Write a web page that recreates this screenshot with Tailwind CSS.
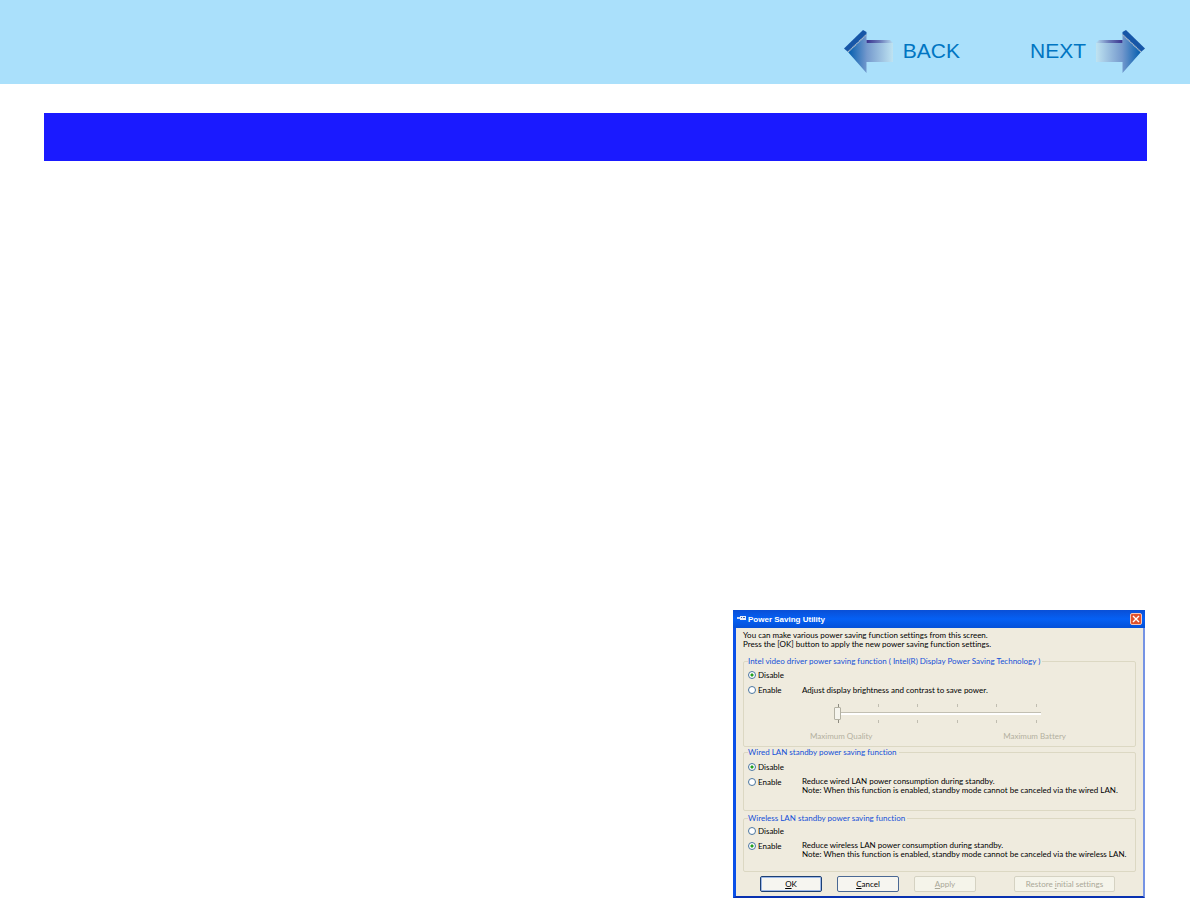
<!DOCTYPE html>
<html lang="en">
<head>
    <meta charset="UTF-8">
    <meta name="viewport" content="width=device-width, initial-scale=1.0">
    <title>Power Saving Utility</title>
    <script src="https://cdn.jsdelivr.net/npm/@tailwindcss/browser@4"></script>
</head>
<body class="bg-white font-['Liberation_Sans',Arial,sans-serif]">
    <div class="flex min-h-screen flex-col">
        <header class="flex h-[84px] items-center justify-end bg-[#aae0fb] pt-[18px] pr-[45px]">
            <nav class="flex gap-[70px] text-[21px] leading-6 text-[#0075c2]">
                <a href="#" class="flex items-center gap-[9px]">
                    <svg class="h-11 w-[50px]" viewBox="0 -1 50 44" aria-hidden="true">
                        <defs>
                            <linearGradient id="arrowFill" x1="4" x2="49" y1="0" y2="0" gradientUnits="userSpaceOnUse">
                                <stop offset="0" stop-color="#005cae" />
                                <stop offset=".42" stop-color="#7499cd" />
                                <stop offset="1" stop-color="#bfe3f1" />
                            </linearGradient>
                            <linearGradient id="arrowEdge" x1="23" x2="49" y1="0" y2="0" gradientUnits="userSpaceOnUse">
                                <stop offset="0" stop-color="#3b3590" />
                                <stop offset=".5" stop-color="#6a7bb9" />
                                <stop offset="1" stop-color="#b5dbf0" />
                            </linearGradient>
                        </defs>
                        <g id="arrow">
                            <path d="M4 22 22.500 4.500V43z M22 13H49V32H22z" fill="url(#arrowFill)" />
                            <path d="M22.500 10H46L49 13H22.500z" fill="url(#arrowEdge)" />
                            <path d="M0 18.500 19 0 22.500 2V4.500L4 22z" fill="#1656a7" />
                            <path d="M4 22 22.500 4.500" stroke="#a9b8c8" stroke-width="1.200" stroke-dasharray="1.500 .4" />
                        </g>
                    </svg>
                    BACK
                </a>
                <a href="#" class="flex items-center gap-[9px]">
                    NEXT
                    <svg class="h-11 w-[50px]" viewBox="0 -1 50 44" aria-hidden="true">
                        <use href="#arrow" transform="translate(50 0) scale(-1 1)" />
                    </svg>
                </a>
            </nav>
        </header>

        <div class="mt-[29px] mr-[43px] ml-11 h-12 bg-[#1a1aff]"></div>

        <!-- Power Saving Utility dialog -->
        <main class="mt-auto mr-[45px] w-[412px] self-end border-r-2 border-b-2 border-l-3 border-r-[#7593e4] border-b-[#0831b0] border-l-[#0a50e8] bg-[#efebde] font-[Lato,'Liberation_Sans',sans-serif] text-[8px] leading-[10px] text-black [font-variant-ligatures:none]">
            <div class="-mr-0.5 -ml-[3px] flex h-[18px] items-center bg-linear-to-b from-[#0a4fd6] via-[#0560f4] to-[#0450d8] pr-[3px] pl-1">
                <svg class="h-2 w-2.5" viewBox="0 0 10 8" aria-hidden="true">
                    <path d="M0 2h3v2H0z" fill="#cfdcf5" />
                    <path d="M3 1h6v4H3z" fill="#e8eefa" />
                    <path d="M4 2.500h1M6 2.500h2" stroke="#3d62a8" />
                </svg>
                <h1 class="ml-px flex-1 pt-0.5 font-['Liberation_Sans',Arial,sans-serif] font-bold text-white">Power Saving Utility</h1>
                <button type="button" aria-label="Close" class="flex size-3 items-center justify-center rounded-[2px] border border-[#f5c6b8] bg-[#e0512c]">
                    <svg class="size-2" viewBox="0 0 8 8" aria-hidden="true">
                        <path d="M1 1l6 6M7 1 1 7" stroke="#fff" stroke-width="1.400" />
                    </svg>
                </button>
            </div>

            <div class="px-[7px] pt-[3px] pb-1">
                <p class="leading-[9px]">You can make various power saving function settings from this screen.<br>Press the [OK] button to apply the new power saving function settings.</p>

                <fieldset class="mt-[7px] h-[91px] rounded-[2px] border border-[#dcd8c3] px-1">
                    <legend class="pr-0.5 text-[#1450d8]">Intel video driver power saving function ( Intel(R) Display Power Saving Technology )</legend>
                    <div class="flex flex-col gap-[5px] pt-1">
                        <label class="flex items-center gap-0.5">
                            <input type="radio" name="video" checked class="size-2 appearance-none rounded-full border border-[#4a76a0] bg-white checked:bg-radial checked:from-[#21a121] checked:from-25% checked:to-white checked:to-50%">
                            Disable
                        </label>
                        <div class="flex">
                            <label class="flex w-[54px] shrink-0 items-center gap-0.5">
                                <input type="radio" name="video" class="size-2 appearance-none rounded-full border border-[#4a76a0] bg-white checked:bg-radial checked:from-[#21a121] checked:from-25% checked:to-white checked:to-50%">
                                Enable
                            </label>
                            <p>Adjust display brightness and contrast to save power.</p>
                        </div>
                    </div>
                    <div class="mt-[9px] ml-[86px] w-[207px]">
                        <div class="flex justify-between px-1">
                            <i class="h-[3px] w-px bg-[#8d8b80]"></i>
                            <i class="h-[3px] w-px bg-[#c0bdb0]"></i>
                            <i class="h-[3px] w-px bg-[#c0bdb0]"></i>
                            <i class="h-[3px] w-px bg-[#c0bdb0]"></i>
                            <i class="h-[3px] w-px bg-[#c0bdb0]"></i>
                            <i class="h-[3px] w-px bg-[#c0bdb0]"></i>
                        </div>
                        <input type="range" min="0" max="5" value="0" disabled aria-label="Display quality" class="block h-[13px] w-full appearance-none bg-transparent [&::-webkit-slider-runnable-track]:h-[3px] [&::-webkit-slider-runnable-track]:border-t [&::-webkit-slider-runnable-track]:border-[#c2bfb2] [&::-webkit-slider-runnable-track]:bg-white [&::-webkit-slider-thumb]:-mt-1.5 [&::-webkit-slider-thumb]:h-[13px] [&::-webkit-slider-thumb]:w-[7px] [&::-webkit-slider-thumb]:appearance-none [&::-webkit-slider-thumb]:rounded-[1px] [&::-webkit-slider-thumb]:border [&::-webkit-slider-thumb]:border-[#b3b1a3] [&::-webkit-slider-thumb]:bg-[#f5f4ed]">
                        <div class="flex justify-between px-1">
                            <i class="h-[3px] w-px bg-[#8d8b80]"></i>
                            <i class="h-[3px] w-px bg-[#c0bdb0]"></i>
                            <i class="h-[3px] w-px bg-[#c0bdb0]"></i>
                            <i class="h-[3px] w-px bg-[#c0bdb0]"></i>
                            <i class="h-[3px] w-px bg-[#c0bdb0]"></i>
                            <i class="h-[3px] w-px bg-[#c0bdb0]"></i>
                        </div>
                    </div>
                    <div class="mt-2 ml-[62px] flex w-[256px] justify-between text-[#b3b09f]">
                        <span>Maximum Quality</span>
                        <span>Maximum Battery</span>
                    </div>
                </fieldset>

                <fieldset class="h-16 rounded-[2px] border border-[#dcd8c3] px-1">
                    <legend class="pr-0.5 text-[#1450d8]">Wired LAN standby power saving function</legend>
                    <div class="flex flex-col gap-[5px] pt-[5px]">
                        <label class="flex items-center gap-0.5">
                            <input type="radio" name="wired" checked class="size-2 appearance-none rounded-full border border-[#4a76a0] bg-white checked:bg-radial checked:from-[#21a121] checked:from-25% checked:to-white checked:to-50%">
                            Disable
                        </label>
                        <div class="flex items-start">
                            <label class="flex w-[54px] shrink-0 items-center gap-0.5">
                                <input type="radio" name="wired" class="size-2 appearance-none rounded-full border border-[#4a76a0] bg-white checked:bg-radial checked:from-[#21a121] checked:from-25% checked:to-white checked:to-50%">
                                Enable
                            </label>
                            <p class="leading-[9px]">Reduce wired LAN power consumption during standby.<br>Note: When this function is enabled, standby mode cannot be canceled via the wired LAN.</p>
                        </div>
                    </div>
                </fieldset>

                <fieldset class="mt-0.5 h-[59px] rounded-[2px] border border-[#dcd8c3] px-1">
                    <legend class="pr-0.5 text-[#1450d8]">Wireless LAN standby power saving function</legend>
                    <div class="flex flex-col gap-[5px] pt-[3px]">
                        <label class="flex items-center gap-0.5">
                            <input type="radio" name="wireless" class="size-2 appearance-none rounded-full border border-[#4a76a0] bg-white checked:bg-radial checked:from-[#21a121] checked:from-25% checked:to-white checked:to-50%">
                            Disable
                        </label>
                        <div class="flex items-start">
                            <label class="flex w-[54px] shrink-0 items-center gap-0.5">
                                <input type="radio" name="wireless" checked class="size-2 appearance-none rounded-full border border-[#4a76a0] bg-white checked:bg-radial checked:from-[#21a121] checked:from-25% checked:to-white checked:to-50%">
                                Enable
                            </label>
                            <p class="leading-[9px]">Reduce wireless LAN power consumption during standby.<br>Note: When this function is enabled, standby mode cannot be canceled via the wireless LAN.</p>
                        </div>
                    </div>
                </fieldset>

                <div class="mt-1 flex gap-[15px] pl-[17px]">
                    <button type="button" class="h-4 w-[62px] rounded-[2px] border border-[#1c3f74] bg-[#f6f5f0] inset-ring inset-ring-[#9db8e8]"><u>O</u>K</button>
                    <button type="button" class="h-4 w-[62px] rounded-[2px] border border-[#4a6894] bg-[#f6f5f0]"><u>C</u>ancel</button>
                    <button type="button" disabled class="h-4 w-[62px] rounded-[2px] border border-[#d5d2c2] bg-[#f5f4ea] text-[#a9a797]"><u>A</u>pply</button>
                    <button type="button" disabled class="ml-[23px] h-4 w-[101px] rounded-[2px] border border-[#d5d2c2] bg-[#f5f4ea] text-[#a9a797]">Restore <u>i</u>nitial settings</button>
                </div>
            </div>
        </main>
    </div>
</body>
</html>
